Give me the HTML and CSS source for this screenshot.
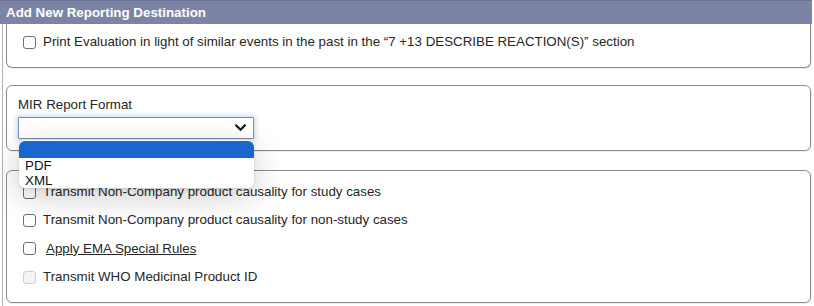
FILE: index.html
```html
<!DOCTYPE html>
<html>
<head>
<meta charset="utf-8">
<link rel="stylesheet" href="styles.css">
</head>
<body>
<div class="panel">
  <div class="header">Add New Reporting Destination</div>
  <div class="body">
    <div class="card card-first">
      <label class="row"><input type="checkbox" class="cb"><span class="txt">Print Evaluation in light of similar events in the past in the “7 +13 DESCRIBE REACTION(S)” section</span></label>
    </div>

    <div class="card card-format">
      <div class="field-label">MIR Report Format</div>
      <div class="select-wrap">
        <div class="select">
          <svg class="chev" width="11" height="8" viewBox="0 0 11 8"><path d="M1.2 1.5 L5.5 5.8 L9.8 1.5" fill="none" stroke="#111" stroke-width="2.2" stroke-linecap="square"/></svg>
        </div>
        <div class="dropdown">
          <div class="opt opt-selected">&nbsp;</div>
          <div class="opt">PDF</div>
          <div class="opt">XML</div>
        </div>
      </div>
    </div>

    <div class="card card-opts">
      <label class="row"><input type="checkbox" class="cb"><span class="txt">Transmit Non-Company product causality for study cases</span></label>
      <label class="row"><input type="checkbox" class="cb"><span class="txt">Transmit Non-Company product causality for non-study cases</span></label>
      <label class="row row-tall"><input type="checkbox" class="cb"><span class="txt link">Apply EMA Special Rules</span></label>
      <label class="row"><input type="checkbox" class="cb" disabled><span class="txt">Transmit WHO Medicinal Product ID</span></label>
    </div>
  </div>
</div>
</body>
</html>
```

FILE: styles.css
```css
* { box-sizing: border-box; }

body {
  margin: 0;
  background: #fff;
  font-family: "Liberation Sans", Arial, sans-serif;
  font-size: 13.33px;
  color: #262626;
}

.panel {
  width: 812px;
}

.header {
  height: 24px;
  line-height: 23px;
  background: #7b84a4;
  border-top: 1px solid #6c7390;
  color: #fff;
  font-weight: bold;
  font-size: 13.33px;
  padding-left: 6px;
}

.body {
  margin-left: 2px;
  border-left: 1px solid #b4b4b4;
  padding-left: 3px;
  padding-right: 1px;
  height: 282px;
}

.card {
  width: 805px;
  border: 1px solid #8c8c8c;
  border-radius: 6px;
  background: #fff;
  box-shadow: 1px 1px 1px rgba(0, 0, 0, 0.08);
}

.card-first {
  border-top: none;
  border-top-left-radius: 0;
  border-top-right-radius: 0;
  height: 44px;
  padding: 9px 0 0 16px;
}

.card-format {
  margin-top: 17px;
  height: 66px;
  padding: 10px 0 0 11px;
  position: relative;
  z-index: 2;
}

.card-opts {
  margin-top: 19px;
  height: 133px;
  padding: 7px 0 0 16px;
}

.row {
  display: flex;
  align-items: center;
  height: 18px;
  white-space: nowrap;
}

.card-opts .row {
  height: 28px;
}

.card-opts .row-tall {
  height: 29px;
}

.cb {
  appearance: none;
  -webkit-appearance: none;
  width: 13px;
  height: 13px;
  margin: 0;
  border: 1px solid #6f6f6f;
  border-radius: 3px;
  background: #fff;
  flex: none;
}

.cb:disabled {
  border-color: #cfcfcf;
  background: #f4f4f4;
}

.txt {
  margin-left: 7px;
  line-height: 16px;
}

.txt.link {
  margin-left: 10px;
  text-decoration: underline;
}

.field-label {
  height: 16px;
  line-height: 16px;
  padding-top: 1px;
}

.select-wrap {
  position: relative;
  margin-top: 5px;
  width: 236px;
}

.select {
  height: 22px;
  border: 1px solid #7a8fb0;
  border-radius: 1px;
  background: #fff;
  box-shadow: 0 0 4px 2px rgba(120, 160, 220, 0.35);
  display: flex;
  align-items: center;
  justify-content: flex-end;
  padding-right: 7px;
}

.chev {
  display: block;
}

.dropdown {
  position: absolute;
  left: 1px;
  top: 23px;
  width: 235px;
  height: 48px;
  background: #fff;
  border-radius: 6px;
  box-shadow: 0 8px 32px rgba(0, 0, 0, 0.2), 0 1px 3px rgba(0, 0, 0, 0.12);
  overflow: hidden;
  padding-top: 1px;
}

.opt {
  height: 15px;
  line-height: 15px;
  padding-left: 6px;
  color: #111;
}

.opt-selected {
  height: 17px;
  background: #1a66cf;
  border-radius: 6px 6px 0 0;
}
```
